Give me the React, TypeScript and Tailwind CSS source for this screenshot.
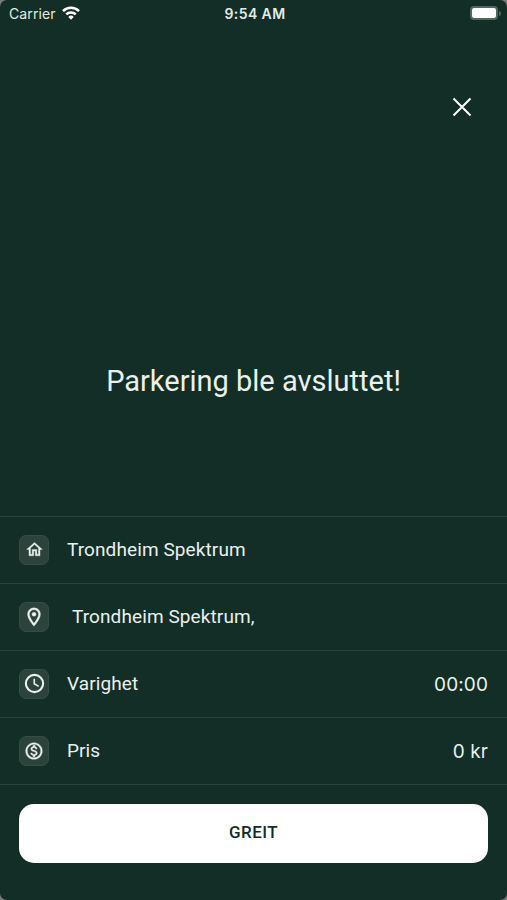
import React from 'react';

const icons = {
  home: (
    <svg viewBox="0 0 24 24" fill="currentColor" stroke="currentColor" strokeWidth="0.4" className="size-[19px]">
      <path d="M12 5.69l5 4.5V18h-2v-6H9v6H7v-7.81l5-4.5M12 3L2 12h3v8h6v-6h2v6h6v-8h3L12 3z" />
    </svg>
  ),
  place: (
    <svg viewBox="0 0 24 24" fill="currentColor" stroke="currentColor" strokeWidth="0.4" className="size-[22px]">
      <path d="M12 2C8.13 2 5 5.13 5 9c0 5.25 7 13 7 13s7-7.75 7-13c0-3.87-3.13-7-7-7zM7 9c0-2.76 2.24-5 5-5s5 2.24 5 5c0 2.88-2.88 7.19-5 9.88C9.92 16.21 7 11.85 7 9z" />
      <circle cx="12" cy="9" r="2.2" />
    </svg>
  ),
  clock: (
    <svg viewBox="0 0 24 24" fill="none" stroke="currentColor" className="size-[23px]">
      <circle cx="12" cy="12" r="9" strokeWidth="2.2" />
      <path d="M11.75 7v5.3l4.6 2.7" strokeWidth="1.7" />
    </svg>
  ),
  price: (
    <svg viewBox="0 0 24 24" fill="currentColor" stroke="currentColor" strokeWidth="0.4" className="size-5">
      <path d="M12 2C6.48 2 2 6.48 2 12s4.48 10 10 10 10-4.48 10-10S17.52 2 12 2zm0 18c-4.41 0-8-3.59-8-8s3.59-8 8-8 8 3.59 8 8-3.59 8-8 8zm.31-8.86c-1.77-.45-2.34-.94-2.34-1.67 0-.84.79-1.43 2.1-1.43 1.38 0 1.9.66 1.94 1.64h1.71c-.05-1.34-.87-2.57-2.49-2.97V5H10.9v1.69c-1.51.32-2.72 1.3-2.72 2.81 0 1.79 1.49 2.69 3.66 3.21 1.95.46 2.34 1.15 2.34 1.87 0 .53-.39 1.39-2.1 1.39-1.6 0-2.23-.72-2.32-1.64H8.04c.1 1.7 1.36 2.66 2.86 2.97V19h2.34v-1.67c1.52-.29 2.72-1.16 2.73-2.77-.01-2.2-1.9-2.96-3.66-3.42z" />
    </svg>
  ),
};

const rows = [
  { icon: icons.home, label: 'Trondheim Spektrum', value: '', labelClass: '' },
  { icon: icons.place, label: 'Trondheim Spektrum,', value: '', labelClass: 'pl-[5px]' },
  { icon: icons.clock, label: 'Varighet', value: '00:00', labelClass: '' },
  { icon: icons.price, label: 'Pris', value: '0 kr', labelClass: '' },
];

function StatusBar() {
  return (
    <div className="grid h-[26px] grid-cols-3 items-center pr-[6px] pl-[9px] font-['Inter',sans-serif] text-[14px] text-[#e3ebe7]">
      <div className="flex items-center gap-[6px]">
        <span className="tracking-[0.1px]">Carrier</span>
        <svg viewBox="0 0 18 14" className="h-[14px] w-[18px]" fill="none" stroke="#fff" strokeWidth="2.6">
          <path d="M1 5.1a11.4 11.4 0 0 1 16 0" />
          <path d="M4.2 8.4a6.9 6.9 0 0 1 9.6 0" />
          <path d="M9 13.8l-2.7-2.9a3.8 3.8 0 0 1 5.4 0z" fill="#fff" stroke="none" />
        </svg>
      </div>
      <span className="text-center font-semibold tracking-[0.4px]">9:54 AM</span>
      <div className="flex items-center justify-end gap-px">
        <div className="h-[14px] w-7 rounded-[4px] border-2 border-[#4f675d] p-px">
          <div className="h-full rounded-[1px] bg-white ring-1 ring-white"></div>
        </div>
        <div className="h-[5px] w-[2px] rounded-r-full bg-[#4f675d]"></div>
      </div>
    </div>
  );
}

export default function App() {
  return (
    <div className="h-[900px] w-[507px] bg-[#777b79]">
      <main className="flex h-full flex-col overflow-hidden rounded-[7px] bg-[#132e26] font-['Roboto',sans-serif] text-[#eaf0ed]">
        <StatusBar />

        <div className="flex justify-end pt-[71px] pr-[35px]">
          <button aria-label="Lukk" className="size-5">
            <svg viewBox="0 0 20 20" fill="none" stroke="#fff" strokeWidth="2" className="size-5">
              <path d="M1.5 1.5l17 17M18.5 1.5l-17 17" />
            </svg>
          </button>
        </div>

        <h1 className="mt-[244px] text-center text-[29px] leading-[40px]">
          Parkering ble avsluttet!
        </h1>

        {/* Parking details */}
        <ul className="mt-[114.5px] border-b border-[#2a4239]">
          {rows.map((row, i) => (
            <li key={i} className="flex h-[67.2px] items-center border-t border-[#2a4239] px-[19px] text-[19px]">
              <div className="flex size-[30px] items-center justify-center rounded-[7px] border border-[#354d44] bg-[#2b433a]">
                {row.icon}
              </div>
              <span className={`ml-[18px] pt-px tracking-[0.1px] ${row.labelClass}`}>{row.label}</span>
              <span className="ml-auto pt-0.5 font-['Inter',sans-serif] tracking-[0.1px]">{row.value}</span>
            </li>
          ))}
        </ul>

        <button className="mx-[19px] mt-[18.4px] h-[59px] rounded-[15px] bg-white text-[17px] font-medium tracking-[0.4px] text-[#132e26]">
          GREIT
        </button>
      </main>
    </div>
  );
}
